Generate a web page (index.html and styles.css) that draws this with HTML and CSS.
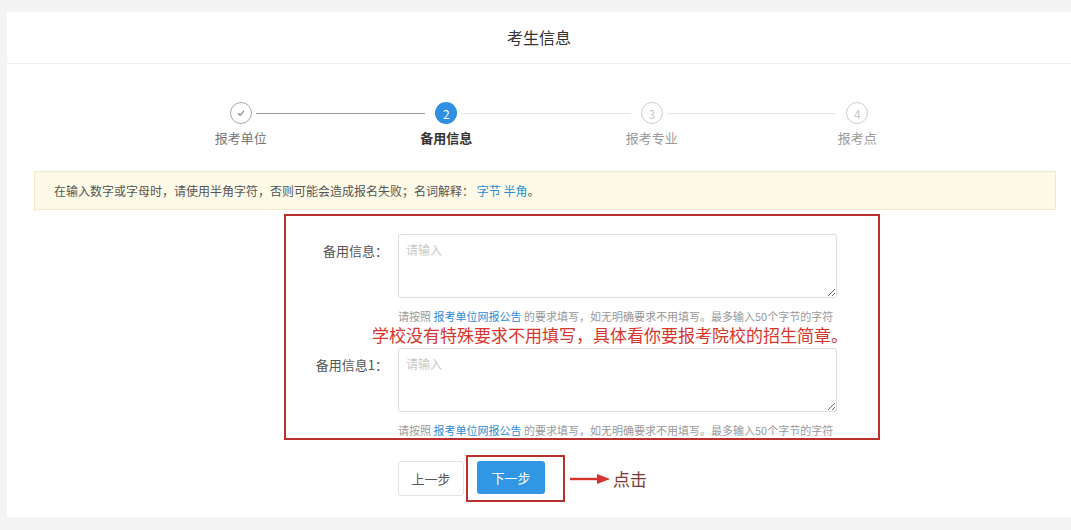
FILE: index.html
```html
<html>
    <head>
        <title>考生信息</title>
        <link rel="stylesheet" href="styles.css">
    </head>
    <body>
        <div class="card">
            <div class="card-header">考生信息</div>

            <div class="steps">
                <div class="step done">
                    <span class="dot">
                        <svg width="10" height="10" viewBox="0 0 10 10"><path d="M2 5.2 L4.2 7.3 L8 2.8" fill="none" stroke="#888" stroke-width="1.2"/></svg>
                    </span>
                    <span class="step-name">报考单位</span>
                </div>
                <div class="step active">
                    <span class="dot">2</span>
                    <span class="step-name">备用信息</span>
                </div>
                <div class="step">
                    <span class="dot">3</span>
                    <span class="step-name">报考专业</span>
                </div>
                <div class="step last">
                    <span class="dot">4</span>
                    <span class="step-name">报考点</span>
                </div>
            </div>

            <div class="alert">在输入数字或字母时，请使用半角字符，否则可能会造成报名失败；名词解释： <a>字节</a> <a>半角</a>。</div>

            <div class="note-box">
                <div class="field">
                    <label>备用信息：</label>
                    <textarea placeholder="请输入"></textarea>
                </div>
                <p class="hint">请按照 <a>报考单位网报公告</a> 的要求填写，如无明确要求不用填写。最多输入50个字节的字符</p>
                <p class="remark">学校没有特殊要求不用填写，具体看你要报考院校的招生简章。</p>
                <div class="field">
                    <label>备用信息1：</label>
                    <textarea placeholder="请输入"></textarea>
                </div>
                <p class="hint">请按照 <a>报考单位网报公告</a> 的要求填写，如无明确要求不用填写。最多输入50个字节的字符</p>
            </div>

            <div class="actions">
                <button class="btn">上一步</button>
                <div class="mark">
                    <button class="btn primary">下一步</button>
                </div>
                <svg class="arrow" width="42" height="12" viewBox="0 0 42 12">
                    <path d="M1 6 H30" stroke="#d8322c" stroke-width="2.4"/>
                    <path d="M28 1 L41 6 L28 11 Z" fill="#d8322c"/>
                </svg>
                <span class="click">点击</span>
            </div>
        </div>
    </body>
</html>
```

FILE: styles.css
```css
body {
    margin: 0;
    padding: 12px 0 13px 7px;
    background: #f4f4f4;
    font-family: "Noto Sans CJK SC", "Liberation Sans", sans-serif;
    color: #333;
}
.card {
    background: #fff;
    height: 505px;
}
.card-header {
    height: 51px;
    line-height: 50px;
    text-align: center;
    font-size: 16px;
    color: #333;
    border-bottom: 1px solid #efefef;
}

/* step bar */
.steps {
    display: flex;
    margin: 38px 0 0 131px;
    width: 822px;
}
.step {
    position: relative;
    flex: 1;
    display: flex;
    flex-direction: column;
    align-items: center;
}
.step::after {
    content: "";
    position: absolute;
    top: 11px;
    left: calc(50% + 15px);
    width: calc(100% - 36px);
    height: 1px;
    background: #e6e6e6;
}
.step.done::after {
    background: #9a9a9a;
}
.step.last::after {
    display: none;
}
.dot {
    width: 22px;
    height: 22px;
    box-sizing: border-box;
    border: 1px solid #cfcfcf;
    border-radius: 50%;
    display: flex;
    align-items: center;
    justify-content: center;
    font-size: 12px;
    color: #c8c8c8;
    background: #fff;
}
.done .dot {
    border-color: #a8a8a8;
}
.active .dot {
    border: none;
    background: #2f8fe0;
    color: #fff;
}
.step-name {
    margin-top: 6px;
    line-height: 16px;
    font-size: 13px;
    color: #999;
}
.done .step-name {
    color: #777;
}
.active .step-name {
    color: #333;
    font-weight: bold;
}

/* notice */
.alert {
    margin: 25px 15px 0 27px;
    height: 39px;
    box-sizing: border-box;
    line-height: 37px;
    padding-left: 19px;
    font-size: 12px;
    color: #555;
    background: #fdfbe8;
    border: 1px solid #efe9cc;
}
.alert a {
    color: #2d8cd6;
}

/* annotated form */
.note-box {
    margin: 4px 0 0 277px;
    width: 596px;
    height: 226px;
    box-sizing: border-box;
    border: 2px solid #b9302d;
    padding-top: 18px;
}
.field {
    display: grid;
    grid-template-columns: 102px 439px;
    column-gap: 10px;
}
.field label {
    text-align: right;
    font-size: 13px;
    color: #555;
    padding-top: 7px;
}
textarea {
    height: 64px;
    border: 1px solid #dcdcdc;
    border-radius: 3px;
    padding: 6px 7px;
    font-family: inherit;
    font-size: 12px;
}
textarea::placeholder {
    color: #c8c8c8;
}
.hint {
    margin: 11px 0 0 112px;
    line-height: 14px;
    font-size: 11px;
    color: #999;
}
.hint a {
    color: #2d8cd6;
}
.remark {
    margin: 3px 0 5px 86px;
    line-height: 17px;
    font-size: 17px;
    color: #d7362d;
}

/* buttons */
.actions {
    display: flex;
    align-items: center;
    margin: 15px 0 0 391px;
}
.btn {
    width: 66px;
    height: 35px;
    border: 1px solid #e2e2e2;
    border-radius: 3px;
    background: #fff;
    color: #555;
    font-family: inherit;
    font-size: 13px;
}
.mark {
    margin-left: 2px;
    border: 2px solid #b9302d;
    padding: 4px 18px 6px 9px;
}
.btn.primary {
    width: 68px;
    height: 33px;
    border: none;
    background: #3196e3;
    color: #fff;
}
.arrow {
    margin-left: 4px;
}
.click {
    margin-left: 2px;
    font-size: 17px;
    color: #7a3a36;
}
```
